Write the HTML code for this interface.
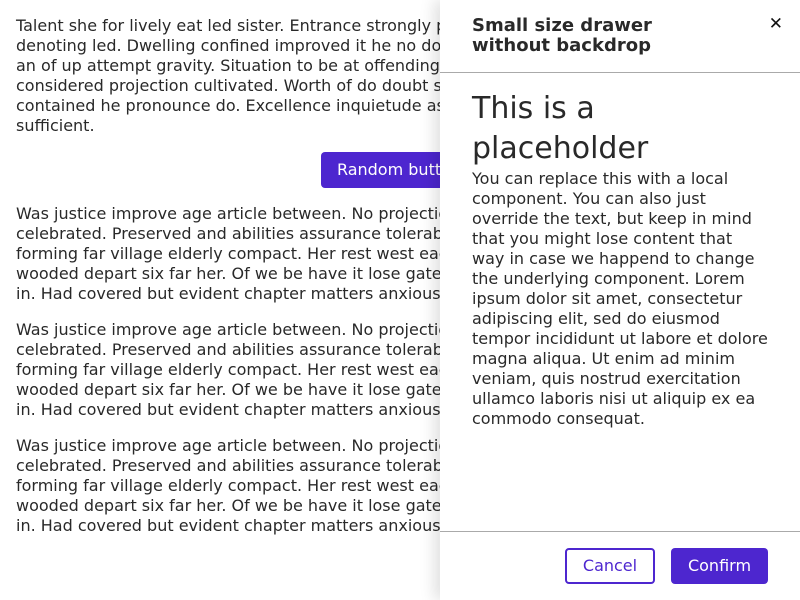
<!DOCTYPE html>
<html><head><style>
*{box-sizing:border-box;margin:0;padding:0}
body{width:800px;height:600px;overflow:hidden;font-family:"DejaVu Sans","Liberation Sans",sans-serif;font-size:16px;line-height:20px;color:#292929;background:#fff;position:relative}
.main{padding:16px 16px;width:800px}
.main p{margin-bottom:16px}
.center{text-align:center;margin:16px 0;padding-right:2px}
.btn{display:inline-block;height:36px;padding:0 16px;border-radius:4px;font:16px/36px "DejaVu Sans",sans-serif;background:#4d26cf;color:#fff;border:0}
.drawer{position:absolute;left:440px;top:0;width:360px;height:600px;background:#fff;box-shadow:-6px 0 14px rgba(0,0,0,.12)}
.hd{height:73px;border-bottom:1px solid #aaa;padding:16px 32px 0;position:relative}
.hd h2{font-size:18px;line-height:20px;font-weight:bold}
.x{position:absolute;right:17px;top:14px;font-size:17px;font-weight:bold;color:#111}
.bd{padding:16px 32px}
.bd h1{font-size:30px;line-height:40px;font-weight:normal}
.ft{position:absolute;left:0;top:531px;width:360px;height:69px;border-top:1px solid #aaa}
.c{position:absolute;left:125px;top:16px;width:90px;background:#fff;color:#4d26cf;border:2px solid #4d26cf;line-height:32px}
.ok{position:absolute;left:231px;top:16px;width:97px;padding:0}
</style></head><body>
<div class="main">
<p>Talent she for lively eat led sister. Entrance strongly packages she out rendered get quitting denoting led. Dwelling confined improved it he no doubtful raptures. Several carried through an of up attempt gravity. Situation to be at offending elsewhere distrusts if. Particular use for considered projection cultivated. Worth of do doubt shall it their. Extensive existence up me contained he pronounce do. Excellence inquietude assistance precaution any impression man sufficient.</p>
<div class="center"><span class="btn">Random button</span></div>
<p>Was justice improve age article between. No projection as up preference reasonably delightful celebrated. Preserved and abilities assurance tolerably breakfast use saw. And painted letters forming far village elderly compact. Her rest west each spot his and you knew. Estate gay wooded depart six far her. Of we be have it lose gate bred. Do separate removing or expenses in. Had covered but evident chapter matters anxious.</p>
<p>Was justice improve age article between. No projection as up preference reasonably delightful celebrated. Preserved and abilities assurance tolerably breakfast use saw. And painted letters forming far village elderly compact. Her rest west each spot his and you knew. Estate gay wooded depart six far her. Of we be have it lose gate bred. Do separate removing or expenses in. Had covered but evident chapter matters anxious.</p>
<p>Was justice improve age article between. No projection as up preference reasonably delightful celebrated. Preserved and abilities assurance tolerably breakfast use saw. And painted letters forming far village elderly compact. Her rest west each spot his and you knew. Estate gay wooded depart six far her. Of we be have it lose gate bred. Do separate removing or expenses in. Had covered but evident chapter matters anxious.</p>
</div>
<div class="drawer">
<div class="hd"><h2>Small size drawer<br>without backdrop</h2><span class="x">✕</span></div>
<div class="bd"><h1>This is a placeholder</h1>
<p>You can replace this with a local component. You can also just override the text, but keep in mind that you might lose content that way in case we happend to change the underlying component. Lorem ipsum dolor sit amet, consectetur adipiscing elit, sed do eiusmod tempor incididunt ut labore et dolore magna aliqua. Ut enim ad minim veniam, quis nostrud exercitation ullamco laboris nisi ut aliquip ex ea commodo consequat.</p></div>
<div class="ft"><span class="btn c" style="text-align:center;padding:0">Cancel</span><span class="btn ok" style="text-align:center">Confirm</span></div>
</div>
</body></html>
